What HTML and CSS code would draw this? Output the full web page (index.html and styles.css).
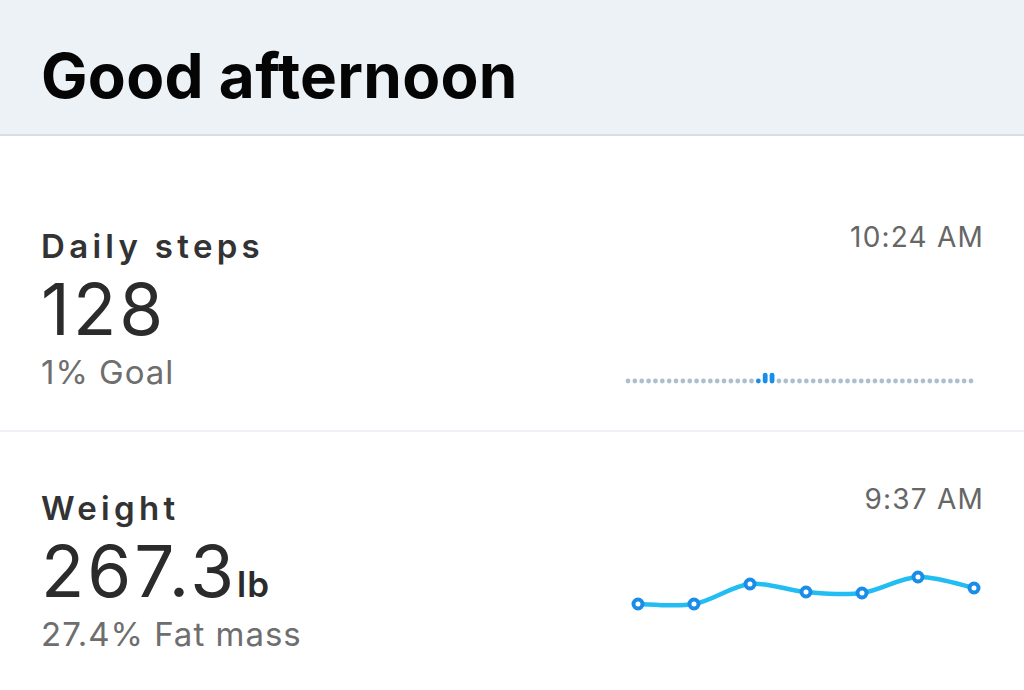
FILE: index.html
```html
<!DOCTYPE html>
<html lang="en">
<head>
    <meta charset="UTF-8">
    <meta name="viewport" content="width=device-width, initial-scale=1.0">
    <title>Dashboard</title>
    <link rel="stylesheet" href="styles.css">
</head>
<body>
    <header class="greeting">
        <h1>Good afternoon</h1>
    </header>

    <main class="cards">
        <!-- Steps -->
        <section class="card steps-card">
            <div class="card-main">
                <div class="card-label">Daily steps</div>
                <div class="card-value">128</div>
                <div class="card-sub">1% Goal</div>
            </div>
            <div class="card-side">
                <div class="card-time">10:24 AM</div>
                <svg class="steps-chart" id="stepsChart" width="360" height="20" viewBox="0 0 360 20"></svg>
            </div>
        </section>

        <!-- Weight -->
        <section class="card weight-card">
            <div class="card-main">
                <div class="card-label">Weight</div>
                <div class="card-value">267.3<span class="unit">lb</span></div>
                <div class="card-sub">27.4% Fat mass</div>
            </div>
            <div class="card-side">
                <div class="card-time">9:37 AM</div>
                <svg class="weight-chart" width="360" height="50" viewBox="0 0 360 50">
                    <path class="weight-line" d="M15,39 C24.3,39 52.3,42.3 71,39 C89.7,35.7 108.3,21 127,19 C145.7,17 164.3,25.5 183,27 C201.7,28.5 220.3,30.5 239,28 C257.7,25.5 276.3,12.8 295,12 C313.7,11.2 341.7,21.2 351,23"/>
                    <circle class="weight-point" cx="15" cy="39" r="4.5"/>
                    <circle class="weight-point" cx="71" cy="39" r="4.5"/>
                    <circle class="weight-point" cx="127" cy="19" r="4.5"/>
                    <circle class="weight-point" cx="183" cy="27" r="4.5"/>
                    <circle class="weight-point" cx="239" cy="28" r="4.5"/>
                    <circle class="weight-point" cx="295" cy="12" r="4.5"/>
                    <circle class="weight-point" cx="351" cy="23" r="4.5"/>
                </svg>
            </div>
        </section>
    </main>

    <script>
        // Step buckets for the day, most are empty
        const steps = [];
        for (let i = 0; i < 51; i++) steps.push(0);
        steps[19] = 1;
        steps[20] = 3;
        steps[21] = 3;

        const svg = document.getElementById('stepsChart');
        const ns = 'http://www.w3.org/2000/svg';
        steps.forEach(function(v, i) {
            const x = 5 + i * 6.86;
            const bar = document.createElementNS(ns, 'rect');
            const h = v > 1 ? 10.6 : 4.8;
            bar.setAttribute('x', x - 2.4);
            bar.setAttribute('y', 13.4 - h);
            bar.setAttribute('width', 4.8);
            bar.setAttribute('height', h);
            bar.setAttribute('rx', 2.4);
            bar.setAttribute('class', v > 0 ? 'step-bar active' : 'step-bar');
            svg.appendChild(bar);
        });
    </script>
</body>
</html>
```

FILE: styles.css
```css
body {
    margin: 0;
    background: #fff;
    font-family: Inter, Lato, sans-serif;
    color: #2e2e2e;
}
.greeting {
    background: #edf2f7;
    border-bottom: 2px solid #d6dee8;
    height: 136px;
    box-sizing: border-box;
    padding: 40px 41px 0;
}
.greeting h1 {
    margin: 0;
    font-size: 62px;
    line-height: 72px;
    font-weight: 700;
    color: #050505;
    letter-spacing: 0.3px;
}
.cards {
    padding-top: 36px;
}
.card {
    display: flex;
    justify-content: space-between;
    padding: 52px 41px 36px;
}
.card + .card {
    border-top: 2px solid #eef2f6;
    padding-top: 54px;
}
.card-label {
    font-size: 33px;
    line-height: 44px;
    font-weight: 600;
    color: #333;
    letter-spacing: 4.3px;
}
.card-value {
    font-size: 71px;
    line-height: 82px;
    font-weight: 400;
    color: #2b2b2b;
    letter-spacing: 3px;
}
.unit {
    font-size: 35px;
    line-height: 1;
    font-weight: 600;
    letter-spacing: 1px;
}
.card-sub {
    font-size: 33px;
    line-height: 44px;
    color: #6e6e6e;
    letter-spacing: 1px;
}
.card-side {
    display: flex;
    flex-direction: column;
    justify-content: space-between;
    align-items: flex-end;
}
.card-time {
    font-size: 28px;
    line-height: 26px;
    color: #666;
    letter-spacing: 1.2px;
    margin-right: -1px;
}
.steps-chart {
    display: block;
    margin-bottom: 4px;
}
.step-bar {
    fill: #abbfcc;
}
.step-bar.active {
    fill: #1a8de8;
}
.weight-chart {
    display: block;
    margin-bottom: 41px;
}
.weight-line {
    fill: none;
    stroke: #22bdf3;
    stroke-width: 4.5;
    stroke-linecap: round;
}
.weight-point {
    fill: #fff;
    stroke: #1a8de8;
    stroke-width: 4;
}
```
